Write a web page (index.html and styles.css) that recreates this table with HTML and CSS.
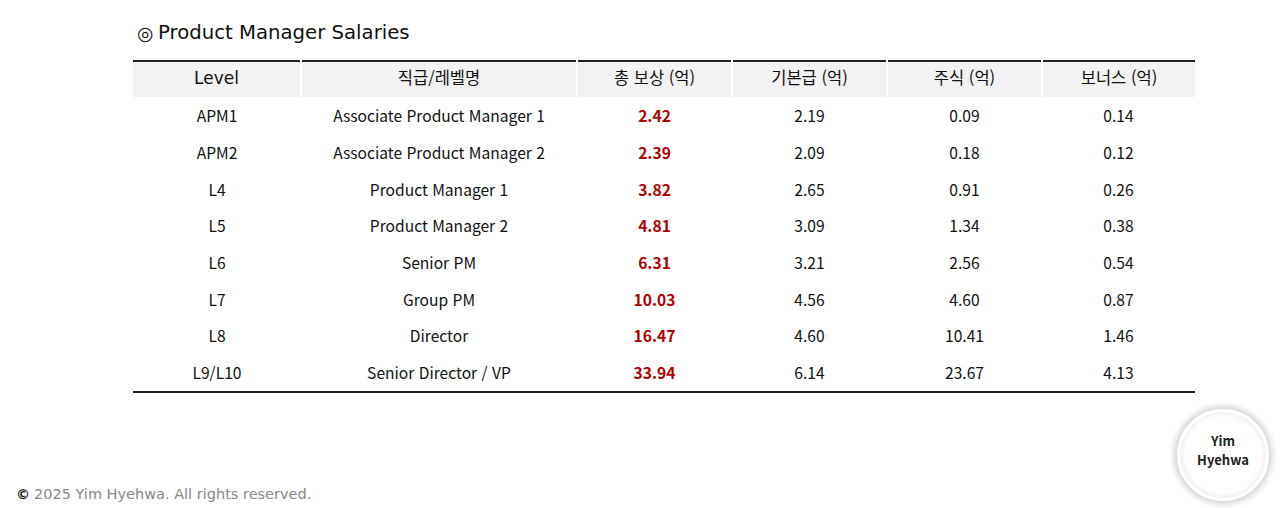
FILE: index.html
```html
<!DOCTYPE html>
<html lang="ko">
<head>
<meta charset="utf-8">
<title>Product Manager Salaries</title>
<link rel="stylesheet" href="styles.css">
</head>
<body>
<main class="page">
  <h1 class="title"><span class="mark">◎</span>Product Manager Salaries</h1>
  <table class="salary">
    <colgroup>
      <col class="c1"><col class="c2"><col class="c3"><col class="c4"><col class="c5"><col class="c6">
    </colgroup>
    <thead>
      <tr><th class="latin">Level</th><th>직급/레벨명</th><th>총 보상 (억)</th><th>기본급 (억)</th><th>주식 (억)</th><th>보너스 (억)</th></tr>
    </thead>
    <tbody>
      <tr><td>APM1</td><td>Associate Product Manager 1</td><td class="total">2.42</td><td>2.19</td><td>0.09</td><td>0.14</td></tr>
      <tr><td>APM2</td><td>Associate Product Manager 2</td><td class="total">2.39</td><td>2.09</td><td>0.18</td><td>0.12</td></tr>
      <tr><td>L4</td><td>Product Manager 1</td><td class="total">3.82</td><td>2.65</td><td>0.91</td><td>0.26</td></tr>
      <tr><td>L5</td><td>Product Manager 2</td><td class="total">4.81</td><td>3.09</td><td>1.34</td><td>0.38</td></tr>
      <tr><td>L6</td><td>Senior PM</td><td class="total">6.31</td><td>3.21</td><td>2.56</td><td>0.54</td></tr>
      <tr><td>L7</td><td>Group PM</td><td class="total">10.03</td><td>4.56</td><td>4.60</td><td>0.87</td></tr>
      <tr><td>L8</td><td>Director</td><td class="total">16.47</td><td>4.60</td><td>10.41</td><td>1.46</td></tr>
      <tr><td>L9/L10</td><td>Senior Director / VP</td><td class="total">33.94</td><td>6.14</td><td>23.67</td><td>4.13</td></tr>
    </tbody>
  </table>
</main>
<footer class="footer"><span class="copy">©</span>2025 Yim Hyehwa. All rights reserved.</footer>
<div class="badge"><span>Yim<br>Hyehwa</span></div>
</body>
</html>
```
FILE: styles.css
```css
html, body {
  margin: 0;
  padding: 0;
  background: #ffffff;
}
body {
  width: 1280px;
  height: 508px;
  position: relative;
  overflow: hidden;
  font-family: "Noto Sans CJK KR", "Noto Sans", sans-serif;
  color: #111;
}
.page {
  padding: 20px 0 0 133px;
}
.title {
  margin: 0 0 0 4px;
  display: flex;
  align-items: center;
  gap: 5px;
  font-family: "DejaVu Sans", sans-serif;
  font-weight: 400;
  font-size: 19.7px;
  line-height: 26px;
  color: #111;
}
.mark {
  font-family: "DejaVu Sans", sans-serif;
  font-size: 19px;
  font-weight: 700;
  line-height: 16px;
  display: inline-block;
  width: 16px;
  text-align: center;
}
.salary {
  margin-top: 14px;
  width: 1062px;
  border-collapse: collapse;
  table-layout: fixed;
  border-top: 2px solid #222;
  border-bottom: 2px solid #222;
}
.c1 { width: 168px; }
.c2 { width: 276px; }
.c3 { width: 155px; }
.c4 { width: 155px; }
.c5 { width: 155px; }
.c6 { width: 153px; }
.salary th {
  height: 30px;
  padding: 0 0 5px;
  background: #f2f2f2;
  font-weight: 400;
  font-size: 16.5px;
  line-height: 20px;
  color: #111;
  text-align: center;
  border-left: 2px solid #fff;
}
.salary th.latin {
  font-family: "DejaVu Sans", sans-serif;
  font-size: 17px;
  padding-bottom: 4px;
  height: 31px;
}
.salary th:first-child {
  border-left: 0;
}
.salary td {
  height: 36.7px;
  padding: 0;
  font-size: 15.6px;
  text-align: center;
  color: #111;
}
.salary td.total {
  color: #b00000;
  font-weight: 700;
}
.footer {
  position: absolute;
  left: 16px;
  top: 485px;
  display: flex;
  align-items: center;
  gap: 7px;
  font-family: "DejaVu Sans", sans-serif;
  font-size: 14.5px;
  line-height: 18px;
  color: #888;
}
.copy {
  color: #222;
  font-size: 14px;
  font-weight: 700;
  width: 11px;
}
.badge {
  position: absolute;
  left: 1177px;
  top: 409px;
  width: 86px;
  height: 86px;
  border-radius: 50%;
  background: #fff;
  border: 3px solid #fff;
  box-shadow: 0 0 6px 3px rgba(0,0,0,0.18), inset 0 0 6px rgba(0,0,0,0.12);
  display: flex;
  align-items: center;
  justify-content: center;
  box-sizing: content-box;
  text-align: center;
  font-family: "Noto Sans CJK KR", sans-serif;
  font-weight: 700;
  font-size: 13px;
  line-height: 19px;
  color: #222;
}
.badge span {
  margin-bottom: 10px;
}
```
